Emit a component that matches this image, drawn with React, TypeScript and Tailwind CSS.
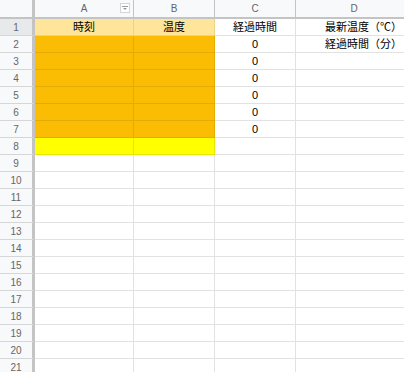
import React from "react";

const font = { fontFamily: '"Liberation Sans", Arial, "Noto Sans CJK JP", sans-serif' };

type Fill = "none" | "head" | "orange" | "yellow";

const fillClass: Record<Fill, string> = {
	none: "bg-white border-[#e2e2e2]",
	head: "bg-[#ffe599] border-[#ecd28a]",
	orange: "bg-[#fbbc04] border-[#e4ab05]",
	yellow: "bg-[#ffff00] border-[#e6e600]",
};

const rows: { a: Fill; c?: string; d?: string }[] = [];
for (let i = 1; i <= 21; i++) {
	if (i === 1) rows.push({ a: "head", c: "経過時間", d: "最新温度（℃）" });
	else if (i <= 7) rows.push({ a: "orange", c: "0", d: i === 2 ? "経過時間（分）" : undefined });
	else if (i === 8) rows.push({ a: "yellow" });
	else rows.push({ a: "none" });
}

const FilterIcon: React.FC = () => (
	<div className="w-[10px] h-[10px] border border-[#d5d5d5] bg-white flex items-center justify-center">
		<svg width="6" height="5" viewBox="0 0 6 5">
			<rect x="0" y="0" width="6" height="1" fill="#9a9a9a" />
			<path d="M1 2 L5 2 L3 4 Z" fill="#9a9a9a" />
		</svg>
	</div>
);

const App: React.FC = () => {
	return (
		<div className="w-[404px] h-[372px] overflow-hidden bg-white" style={font}>
			{/* Column headers */}
			<div className="flex h-[19px] bg-[#f8f9fa] border-b-2 border-[#c4c4c4]">
				<div className="w-[35px] shrink-0 border-r-[3px] border-[#c4c4c4]"></div>
				<div className="w-[99px] shrink-0 border-r border-[#c4c4c4] relative flex items-center justify-center text-[10px] text-[#666]">
					A
					<div className="absolute right-[3px] top-[3px]">
						<FilterIcon />
					</div>
				</div>
				<div className="w-[81px] shrink-0 border-r border-[#c4c4c4] flex items-center justify-center text-[10px] text-[#666]">B</div>
				<div className="w-[81px] shrink-0 border-r border-[#c4c4c4] flex items-center justify-center text-[10px] text-[#666]">C</div>
				<div className="w-[116px] shrink-0 flex items-center justify-center text-[10px] text-[#666]">D</div>
			</div>

			{rows.map((r, i) => {
				const n = i + 1;
				return (
					<div key={n} className="flex h-[17px]">
						<div
							className={`w-[35px] shrink-0 border-r-[3px] border-r-[#c4c4c4] border-b border-b-[#d6d6d6] flex items-center justify-center text-[10px] text-[#666] ${
								n === 1 ? "bg-[#e8e9eb]" : "bg-[#f8f9fa]"
							}`}
						>
							{n}
						</div>
						<div className={`w-[99px] shrink-0 border-r border-b flex items-center justify-center text-[11px] text-black ${fillClass[r.a]}`}>
							{n === 1 ? "時刻" : ""}
						</div>
						<div className={`w-[81px] shrink-0 border-r border-b flex items-center justify-center text-[11px] text-black ${fillClass[r.a]}`}>
							{n === 1 ? "温度" : ""}
						</div>
						<div className="w-[81px] shrink-0 border-r border-b border-[#e2e2e2] flex items-center justify-center text-[11px] text-black">
							{r.c}
						</div>
						<div className="w-[116px] shrink-0 border-b border-[#e2e2e2] flex items-center justify-end pr-[10px] text-[11px] text-black whitespace-nowrap">
							{r.d}
						</div>
					</div>
				);
			})}
		</div>
	);
};

export default App;
